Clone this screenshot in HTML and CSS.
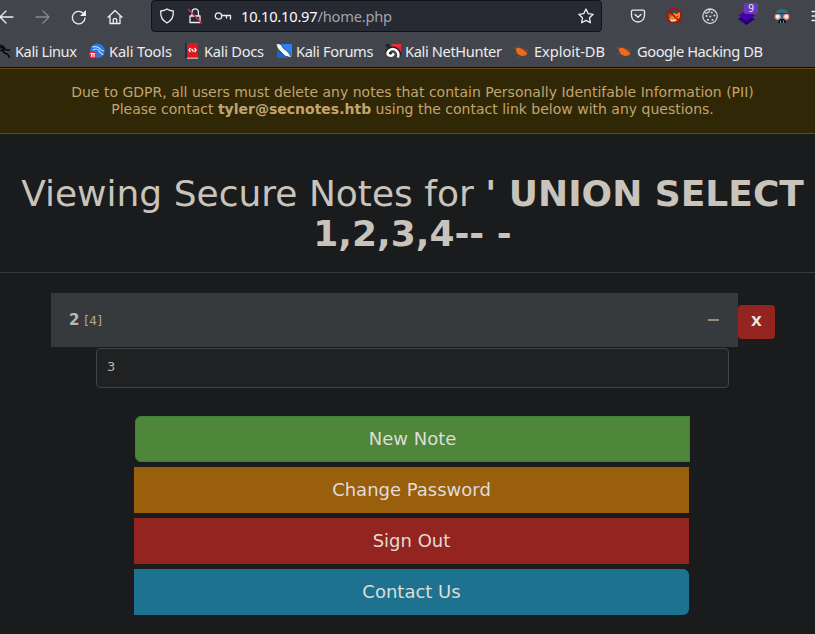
FILE: index.html
```html
<!DOCTYPE html>
<html lang="en">
<head>
<meta charset="utf-8">
<title>Secure Notes</title>
<link rel="stylesheet" href="styles.css">
</head>
<body>
<header class="browser">
  <div class="toolbar">
    <nav class="nav-buttons">
      <svg class="ico back" viewBox="0 0 16 16"><path d="M15 8H2M8 2 2 8l6 6"/></svg>
      <svg class="ico dim" viewBox="0 0 16 16"><path d="M1 8h13M8 2l6 6-6 6"/></svg>
      <svg class="ico" viewBox="0 0 16 16"><path d="M14 9A6.300 6.300 0 1 1 12 4"/><path class="solid" d="M15 1v6H9z"/></svg>
      <svg class="ico" viewBox="0 0 16 16"><path d="M1 8.300 8 1.500l7 6.800M3 7v7.500h10V7M6.300 14v-3.400a1 1 0 0 1 1-1h1.400a1 1 0 0 1 1 1V14"/></svg>
    </nav>
    <div class="urlbar">
      <svg class="ico" viewBox="0 0 16 16"><path d="M8 1c2 1.500 4 1.900 6.300 2 .4 5.500-1.300 9.500-6.300 12C3 12.500 1.300 8.500 1.700 3 4 2.900 6 2.500 8 1z"/></svg>
      <svg class="ico lock" viewBox="0 0 16 16"><path d="M5 7.500V4a3.200 3.200 0 0 1 6.400 0v3.500M3 8h10v6.500H3z"/><path class="slash" d="M1.500 1.500 14.500 15"/></svg>
      <svg class="ico key" viewBox="0 0 18 16"><circle cx="4.500" cy="8" r="3.200"/><path d="M8 7.500h8.500v3.500M12.500 7.500V10"/></svg>
      <span class="address"><b>10.10.10.97</b>/home.php</span>
      <svg class="ico star" viewBox="0 0 16 16"><path d="m8 1 2.200 4.600 5 .7-3.700 3.500.9 5L8 12.400l-4.400 2.400.9-5L.8 6.300l5-.7z"/></svg>
    </div>
    <div class="extensions">
      <svg class="ico" viewBox="0 0 16 16"><path d="M2.800 2.200h10.400A1.300 1.300 0 0 1 14.500 3.500V7.500a6.500 6.500 0 0 1-13 0V3.500A1.300 1.300 0 0 1 2.800 2.200z"/><path d="m5 6.500 3 2.800 3-2.800"/></svg>
      <svg class="art" viewBox="0 0 16 16"><path fill="#f28a22" d="m8 5 3 1 3-3v6l-3 4H5l-2-2 2-4z"/><path fill="#a85a1c" d="M2 8l2-3 2 2-2 3z"/><path fill="#f3e2c8" d="M4 11.500l3 .5 4-1-2 2.500H5z"/><path fill="#4d2a18" d="M11 8h1v1h-1zM8 8h1v1H8z"/><circle cx="8" cy="8" r="7.300" fill="none" stroke="#c4060c" stroke-width="1.300"/><path stroke="#c4060c" stroke-width="1.600" d="m3 3 10 10"/></svg>
      <svg class="ico cookie" viewBox="0 0 16 16"><path d="M7.500 1A7.200 7.200 0 1 0 15.200 8.500 7.200 7.200 0 0 0 7.500 1a3 3 0 0 1-2 3.800A3 3 0 0 1 2.500 4.500"/><g class="dots"><circle cx="9.800" cy="4.500" r="1.100"/><circle cx="4.500" cy="8" r="1.100"/><circle cx="8.300" cy="8.500" r="1.100"/><circle cx="6" cy="11.800" r="1.100"/><circle cx="10.500" cy="12" r="1.100"/><circle cx="12.300" cy="7.500" r="1.100"/></g></svg>
      <span class="layers">
        <svg class="art" viewBox="0 0 17 17"><path fill="#240073" d="m0 11 8.500-5 8.500 5-8.500 6z"/><path fill="#4a00a8" d="m0 7.500 8.500-5 8.500 5-8.500 5.500z"/></svg>
        <span class="badge">9</span>
      </span>
      <svg class="art" viewBox="0 0 16 16"><path fill="#2d6f86" d="M1.500 7.500C1.500 3 4 1 8 1s6.500 2 6.500 6.500z"/><path fill="#2d6f86" d="M3 7h10v5l-1 3H4l-1-3z"/><path fill="#101418" d="M4.500 11h7l.5 4H4z"/><path fill="#4d93a8" d="M6 12.500h1V15H6zM9 12.500h1V15H9z"/><g fill="#fbeee8" stroke="#ef8c7c" stroke-width="1.200"><circle cx="3.700" cy="8.700" r="2.500"/><circle cx="12.300" cy="8.700" r="2.500"/></g><path fill="#153846" d="M2 5.200h12v.8H2z"/></svg>
      <svg class="ico menu" viewBox="0 0 16 16"><path d="M1 3.500h14M1 8h14M1 12.500h14"/></svg>
    </div>
  </div>
  <nav class="bookmarks">
    <a class="mark"><svg class="art" viewBox="0 0 16 16"><path fill="none" stroke="#07080a" stroke-width="1.500" d="M1 2c5 0 8 1 9 4M2 5c4-1 7 0 9 2l4 0M3 9c2-2 5-2 6-1M8 6c-1 4 2 4 4 5 2 1 2 2 2.500 4"/></svg>Kali Linux</a>
    <a class="mark tools"><svg class="art" viewBox="0 0 16 16"><circle cx="8.500" cy="7.800" r="7.300" fill="#2677e8"/><path fill="none" stroke="#b9d8ff" stroke-width="1.200" d="M3 4c4-1 7 0 9 3l3 1M4 7c4-2 5-1 6 1 1 2 3 2 4 4"/><circle cx="3.800" cy="11.800" r="3.800" fill="#ed2533"/><path stroke="#fff" stroke-width="1.200" fill="none" d="M1.500 10.500h4.600M2.800 10.500v3.500M5 10.500v3.500"/></svg>Kali Tools</a>
    <a class="mark docs"><svg class="art" viewBox="0 0 16 16"><path fill="#df1717" d="M2 0h12v15H2z"/><path fill="#192f61" d="M1 0h2v15H1z"/><path fill="#b9a9a9" d="M3 14.500h11V16H3z"/><path fill="none" stroke="#fff" stroke-width="1.300" d="M6.500 5 5 7l1.500 2M10.500 5 12 7l-1.500 2M7.500 6l2 2.500"/></svg>Kali Docs</a>
    <a class="mark forums"><svg class="art" viewBox="0 0 16 16"><path fill="#2980f3" d="M3 1h13v13L10 9z"/><path fill="#1666cf" d="M1 7v8h12z"/><path fill="#f8fbff" stroke="#17191d" stroke-width=".6" d="M0 1c4-1 6 1 7 4l5 4 4 6-7-2-5-5C1 6 1 3 0 1z"/></svg>Kali Forums</a>
    <a class="mark hunter"><svg class="art" viewBox="0 0 16 16"><path fill="#ed2939" d="M6 1h10v12h-3z"/><path fill="none" stroke="#17191d" stroke-width="4" d="M13 14c3-5-2-10-8-8-4 2-3 6 2 6"/><path fill="none" stroke="#fff" stroke-width="2.500" d="M13 14.500c2-6-4-11-9-7-3 3-1 6 3 5l2-2"/><path fill="#17191d" d="m0 2 5-1-2 4z"/></svg>Kali NetHunter</a>
    <a class="mark exploit"><svg class="art" viewBox="0 0 16 16"><path fill="#f26a16" d="M2.500 6c3-2.500 7-1 9 2l3 2-2 2.500-4 .5-4-2z"/><path fill="none" stroke="#97532f" stroke-width=".7" d="M0 5h4M1 11l4-1M5 14l3-2M6 3l2 3M11 5l2 2M12 8l3-1M11 12l3 1"/></svg>Exploit-DB</a>
    <a class="mark google"><svg class="art" viewBox="0 0 16 16"><path fill="#f26a16" d="M2.500 6c3-2.500 7-1 9 2l3 2-2 2.500-4 .5-4-2z"/><path fill="none" stroke="#97532f" stroke-width=".7" d="M0 5h4M1 11l4-1M5 14l3-2M6 3l2 3M11 5l2 2M12 8l3-1M11 12l3 1"/></svg>Google Hacking DB</a>
  </nav>
</header>
<main>
  <div class="alert">Due to GDPR, all users must delete any notes that contain Personally Identifable Information (PII)<br>Please contact <b>tyler@secnotes.htb</b> using the contact link below with any questions.</div>
  <div class="page-header"><h1>Viewing Secure Notes for <b>' UNION SELECT</b> <b>1,2,3,4-- -</b></h1></div>
  <section class="note">
    <div class="note-row">
      <button class="accordion"><span><strong>2</strong> <small>[4]</small></span><span class="minus"></span></button>
      <a class="delete">X</a>
    </div>
    <div class="note-text">3</div>
  </section>
  <div class="actions">
    <a class="btn new">New Note</a>
    <a class="btn change">Change Password</a>
    <a class="btn signout">Sign Out</a>
    <a class="btn contact">Contact Us</a>
  </div>
</main>
</body>
</html>
```
FILE: styles.css
```css
* { box-sizing: border-box; }
body { margin: 0; height: 634px; overflow: hidden; background: #1a1b1c; color: #c8c3bb; font: 14px/17px "DejaVu Sans", sans-serif; }
.browser { height: 68px; overflow: hidden; background: #42454c; border-bottom: 1px solid #0c0c0d; color: #ececef; font: 14.67px/20px "Noto Sans", sans-serif; }
.toolbar { display: flex; height: 36px; align-items: flex-start; }
.ico { display: block; flex: none; width: 16px; height: 16px; fill: none; stroke: #ededf0; stroke-width: 1.3; stroke-linecap: round; stroke-linejoin: round; }
.ico .solid, .ico .dots { fill: #ededf0; stroke: none; }
.ico .slash { stroke: #e22850; }
.art { display: block; flex: none; width: 16px; height: 16px; }
.dim { opacity: .4; }
.cookie { opacity: .85; }
.back { margin: 0 1px 0 -1px; }
.nav-buttons { display: flex; flex: none; gap: 20px; width: 152px; padding-top: 9px; margin-left: -1px; }
.urlbar { display: flex; flex: none; align-items: center; width: 451px; height: 32px; padding: 0 7px; border: 1px solid #111217; border-radius: 4px; background: #272933; }
.lock { margin-left: 12px; }
.key { width: 18px; margin-left: 11px; }
.address { flex: 1; margin-left: 9px; color: #a3a4aa; letter-spacing: -.22px; }
.address b { color: #fbfbfe; font-weight: 400; }
.extensions { display: flex; flex: none; gap: 20px; padding: 8px 0 0 28px; }
.layers { position: relative; width: 16px; }
.layers .art { width: 17px; height: 17px; }
.menu { margin-left: 1px; }
.badge { position: absolute; left: 6px; top: -5px; width: 14px; height: 11px; border-radius: 2px; background: #6938bd; font-size: 10px; line-height: 11px; text-align: center; }
.bookmarks { display: grid; grid-template-columns: 94px 95px 92px 109px 128px 103px 150px; height: 31px; align-items: center; white-space: nowrap; margin: -1px 0 0 -5px; letter-spacing: -.45px; }
.mark { display: flex; align-items: center; gap: 4px; }
.docs { letter-spacing: -.28px; }
.forums { letter-spacing: -.35px; }
.tools { letter-spacing: -.15px; }
.hunter { letter-spacing: -.38px; }
.exploit { gap: 5px; letter-spacing: -.07px; }
.google { gap: 5px; }
.alert { height: 66px; padding: 15px 0 15px 10px; border-top: 1px solid #6b4a0c; border-bottom: 1px solid #6b4a0c; background: #302706; color: #c2a46f; text-align: center; }
.page-header { height: 99px; margin-top: 40px; padding-left: 10px; border-bottom: 1px solid #393c3e; text-align: center; }
h1 { margin: 0; font-size: 36px; font-weight: 400; line-height: 39.6px; }
.note { margin: 20px 0 0 51px; }
.note-row { display: flex; align-items: flex-start; }
.accordion { display: flex; align-items: center; justify-content: space-between; width: 687px; height: 54px; padding: 0 19px 0 18px; border: 0; background: #373a3c; color: #bcb6ad; font: 15px "DejaVu Sans", sans-serif; }
.accordion small { font-size: 12px; letter-spacing: .3px; color: #bba98f; }
.minus { width: 11px; height: 2px; background: #968c7d; }
.delete { display: flex; align-items: center; justify-content: center; width: 37px; height: 34px; margin-top: 12px; padding-bottom: 2px; border-radius: 4px; background: #932420; color: #e8e6e3; font-weight: 700; }
.note-text { width: 633px; height: 40px; margin: 1px 0 0 45px; padding: 9px 10px; border: 1px solid #404446; border-radius: 4px; background: #202122; color: #bcb6ad; font-size: 13px; }
.actions { display: flex; flex-direction: column; gap: 5px; width: 555px; margin: 28px 0 0 134px; }
.btn { display: flex; align-items: center; justify-content: center; height: 46px; padding-bottom: 2px; color: #dfdcd7; font-size: 18px; }
.new { margin: 0 -1px 0 1px; border: 1px solid #3d8338; border-radius: 6px 0 0 6px; background: #4e873a; }
.change { background: #995f0d; }
.signout { background: #932420; }
.contact { border-radius: 0 6px 6px 0; background: #1d738f; }
```
